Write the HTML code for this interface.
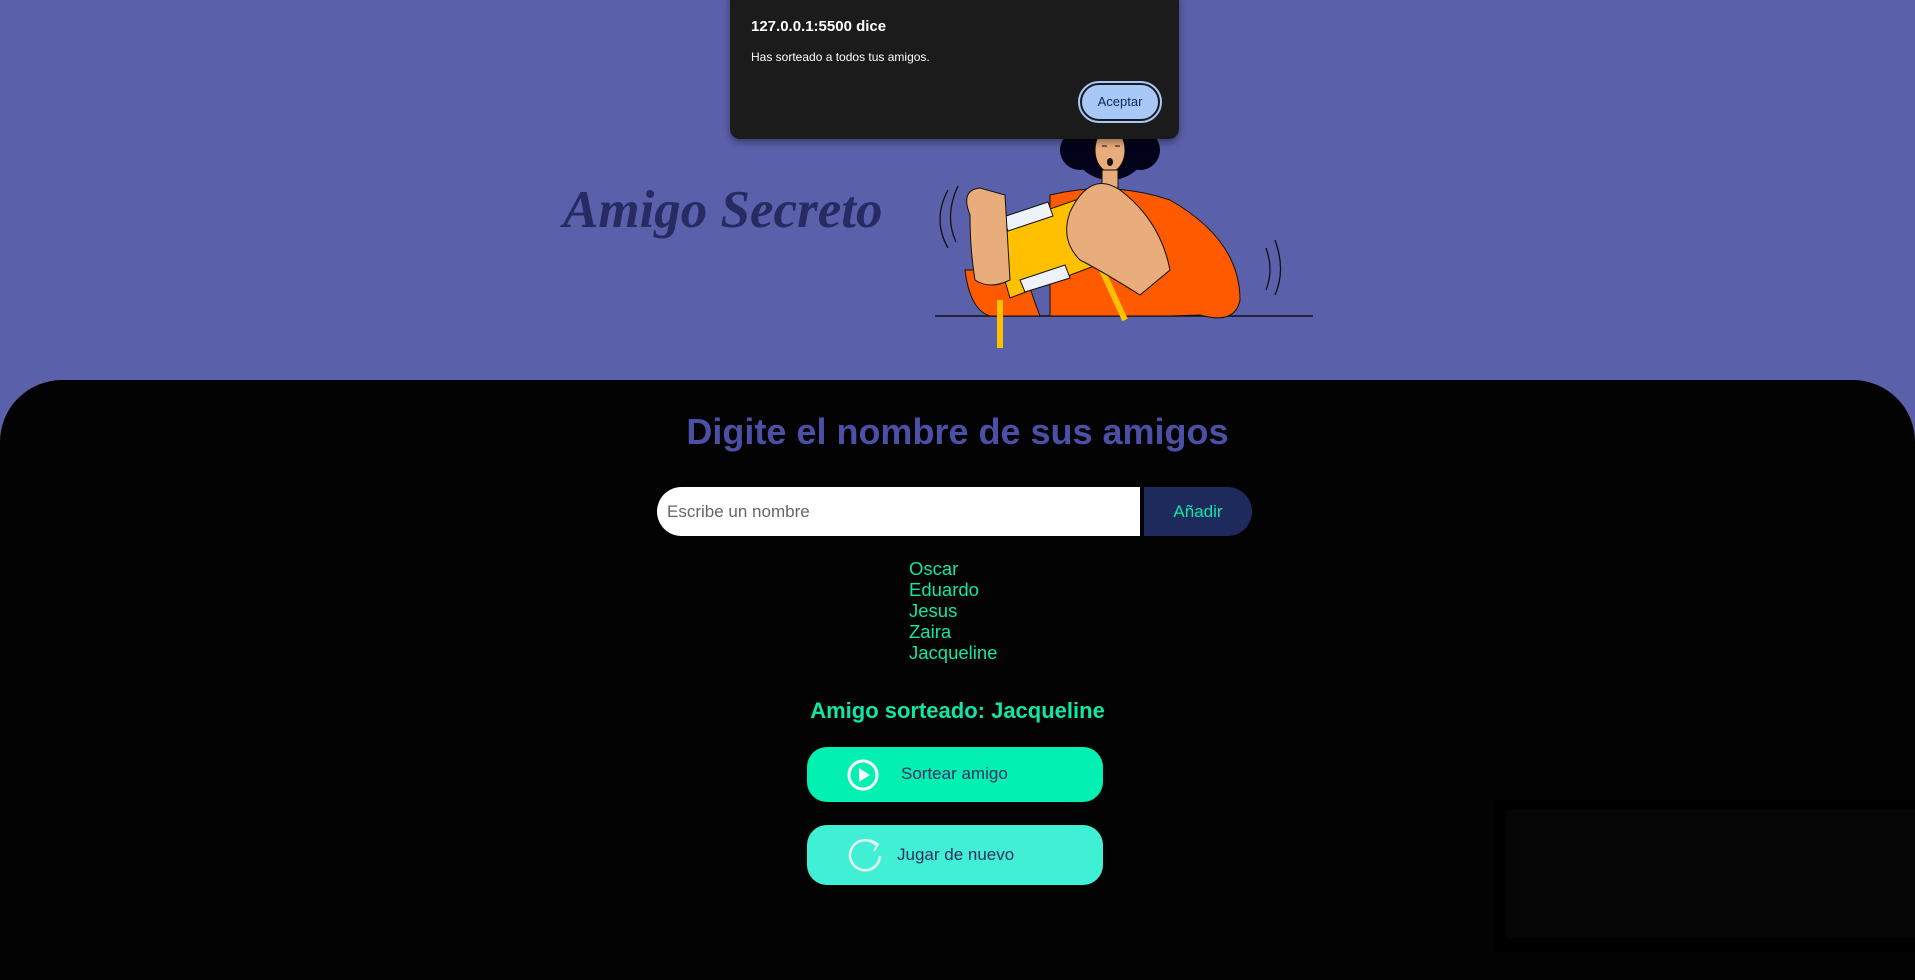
<!DOCTYPE html>
<html><head><meta charset="utf-8"><style>
html,body{margin:0;padding:0;width:1915px;height:952px;overflow:hidden;background:#5b60aa;font-family:"Liberation Sans",sans-serif;}
.title{position:absolute;left:563px;top:180px;font-family:"Liberation Serif",serif;font-style:italic;font-weight:bold;font-size:53px;color:#262b62;letter-spacing:0px}
.main{position:absolute;left:0;top:380px;width:1915px;height:600px;background:#030303;border-radius:62px 62px 0 0}
h2{position:absolute;left:0;width:1915px;text-align:center;top:411px;margin:0;font-size:36px;font-weight:bold;color:#4b50a6}
.inp{position:absolute;left:657px;top:487px;width:483px;height:49px;background:#fff;border-radius:25px 0 0 25px}
.inp span{position:absolute;left:10px;top:15px;font-size:17px;color:#666}
.add{position:absolute;left:1144px;top:487px;width:108px;height:49px;background:#1f2a5c;border-radius:0 25px 25px 0;color:#10e6a6;font-size:17px;text-align:center;line-height:49px}
.list{position:absolute;left:909px;top:558px;font-size:18.5px;line-height:21px;color:#10e6a6}
.res{position:absolute;left:0;width:1915px;text-align:center;top:698px;font-size:22px;font-weight:bold;color:#10e6a6}
.btn{position:absolute;left:807px;width:296px;height:55px;border-radius:20px;color:#303060;font-size:17px}
.b1{top:747px;background:#02f0b2}
.b2{top:825px;height:60px;background:#40f0d5}
.dlg{position:absolute;left:730px;top:-10px;width:449px;height:149px;background:#1b1b1b;border-radius:10px;box-shadow:0 3px 8px rgba(0,0,0,.4)}
.dlg .t{position:absolute;left:21px;top:28px;color:#fff;font-weight:bold;font-size:15px}
.dlg .m{position:absolute;left:21px;top:60px;color:#fff;font-size:12px}
.ok{position:absolute;left:350px;top:93px;width:76px;height:34px;border-radius:19px;background:#a8c8f8;border:2px solid #1b1b1b;outline:2px solid #a8c8f8;color:#0a2a60;font-size:13px;text-align:center;line-height:34px}
.box{position:absolute;left:1495px;top:800px;width:420px;height:152px;background:#000}
.box div{position:absolute;left:11px;top:10px;right:0;bottom:14px;background:#050505}
</style></head><body>
<div class="title">Amigo Secreto</div>
<svg style="position:absolute;left:930px;top:120px" width="390" height="232" viewBox="0 0 390 232">
<line x1="5" y1="196" x2="383" y2="196" stroke="#111" stroke-width="1.5"/>
<path d="M18 70 Q2 100 18 128 M28 66 Q14 96 26 122" stroke="#111" fill="none" stroke-width="1.3"/>
<path d="M345 120 Q356 150 345 175 M336 128 Q344 150 336 170" stroke="#111" fill="none" stroke-width="1.3"/>
<circle cx="180" cy="20" r="40" fill="#02021a"/>
<circle cx="150" cy="30" r="20" fill="#02021a"/>
<circle cx="210" cy="30" r="20" fill="#02021a"/>
<ellipse cx="180" cy="30" rx="15" ry="22" fill="#e9ad7c" stroke="#111"/>
<path d="M172 26 h5 M185 26 h5" stroke="#111"/>
<ellipse cx="180" cy="42" rx="3" ry="4" fill="#111"/>
<rect x="172" y="50" width="16" height="18" fill="#e9ad7c" stroke="#111"/>
<path d="M120 75 Q180 60 240 80 Q310 120 310 180 Q305 205 270 195 L240 196 L120 196 Z" fill="#ff5a00" stroke="#111"/>
<path d="M35 150 Q40 190 60 196 L110 196 Q100 170 95 150 Z" fill="#ff5a00" stroke="#111"/>
<path d="M60 110 L160 75 L180 140 L80 178 Z" fill="#ffc000" stroke="#111"/>
<path d="M73 97 L118 82 L123 96 L78 111 Z M90 160 L135 145 L140 158 L95 172 Z" fill="#eef2fb" stroke="#111"/>
<path d="M70 180 L70 228 M172 150 L195 200" stroke="#ffc000" stroke-width="6"/>
<path d="M40 95 Q30 70 50 68 L75 75 L80 160 Q60 170 45 160 Q40 130 40 95Z" fill="#e9ad7c" stroke="#111"/>
<path d="M140 92 Q160 50 190 70 Q230 100 240 150 L210 175 Q170 150 150 140 Q130 120 140 92Z" fill="#e9ad7c" stroke="#111"/>
</svg>
<div class="dlg"><div class="t">127.0.0.1:5500 dice</div><div class="m">Has sorteado a todos tus amigos.</div><div class="ok">Aceptar</div></div>
<div class="main"></div>
<h2>Digite el nombre de sus amigos</h2>
<div class="inp"><span>Escribe un nombre</span></div>
<div class="add">Añadir</div>
<div class="list">Oscar<br>Eduardo<br>Jesus<br>Zaira<br>Jacqueline</div>
<div class="res">Amigo sorteado: Jacqueline</div>
<div class="btn b1"><svg style="position:absolute;left:39px;top:11px" width="34" height="34"><circle cx="17" cy="17" r="14" fill="none" stroke="#fff" stroke-width="3"/><path d="M13 10 L24 17 L13 24Z" fill="#fff"/></svg><span style="position:absolute;left:94px;top:17px">Sortear amigo</span></div>
<div class="btn b2"><svg style="position:absolute;left:41px;top:12px" width="36" height="38"><path d="M28 8 A15 15 0 1 0 32 19" fill="none" stroke="#e8f0ee" stroke-width="2.5"/><path d="M22 3 L30 7 L26 14" fill="none" stroke="#e8f0ee" stroke-width="2"/></svg><span style="position:absolute;left:90px;top:20px">Jugar de nuevo</span></div>
<div class="box"><div></div></div>
</body></html>
